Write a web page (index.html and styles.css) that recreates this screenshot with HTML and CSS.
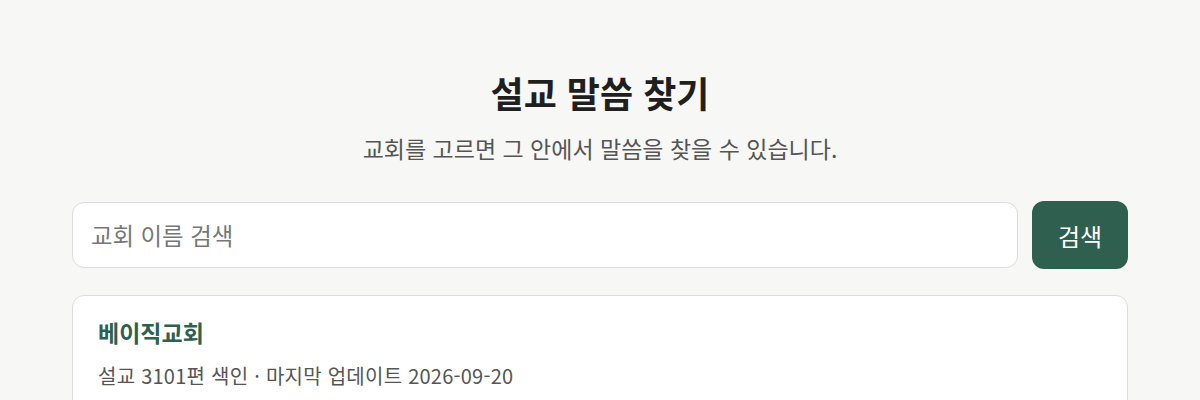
FILE: index.html
```html
<!DOCTYPE html>
<html lang="ko">
<head>
<meta charset="utf-8">
<link rel="stylesheet" href="styles.css">
</head>
<body>
<main class="page">
  <h1 class="title">설교 말씀 찾기</h1>
  <p class="subtitle">교회를 고르면 그 안에서 말씀을 찾을 수 있습니다.</p>
  <form class="search">
    <input class="search-input" type="text" placeholder="교회 이름 검색">
    <button class="search-btn" type="button">검색</button>
  </form>
  <section class="card">
    <h2 class="card-title">베이직교회</h2>
    <p class="card-meta">설교 3101편 색인 · 마지막 업데이트 2026-09-20</p>
  </section>
</main>
</body>
</html>
```

FILE: styles.css
```css
html, body {
  margin: 0;
  padding: 0;
  background: #f7f7f5;
  font-family: "Noto Sans CJK KR", "Noto Sans", sans-serif;
  color: #222;
}
.page {
  width: 1056px;
  margin: 0 auto;
  padding-top: 70px;
  display: flex;
  flex-direction: column;
}
.title {
  margin: 0;
  text-align: center;
  font-size: 36px;
  line-height: 44px;
  font-weight: 700;
  color: #1f1f1f;
}
.subtitle {
  margin: 19px 0 0;
  text-align: center;
  font-size: 23px;
  line-height: 30px;
  color: #555;
}
.search {
  margin-top: 38px;
  display: flex;
  align-items: center;
  gap: 14px;
}
.search-input {
  flex: 1;
  height: 66px;
  box-sizing: border-box;
  border: 1px solid #dcdcdc;
  border-radius: 12px;
  background: #fff;
  padding: 0 18px;
  font-family: inherit;
  font-size: 23.4px;
  color: #222;
  outline: none;
}
.search-input::placeholder {
  color: #777;
}
.search-btn {
  width: 96px;
  height: 68px;
  border: none;
  border-radius: 12px;
  background: #2f5f4f;
  color: #fff;
  font-family: inherit;
  font-size: 24px;
  cursor: pointer;
}
.card {
  margin-top: 26px;
  background: #fff;
  border: 1px solid #dcdcdc;
  border-radius: 12px;
  padding: 21px 25px 24px;
}
.card-title {
  margin: 0;
  font-size: 23px;
  line-height: 30px;
  font-weight: 700;
  color: #2f5f4f;
}
.card-meta {
  margin: 15px 0 0;
  font-size: 20px;
  line-height: 28px;
  letter-spacing: 0.25px;
  color: #555;
}
```
